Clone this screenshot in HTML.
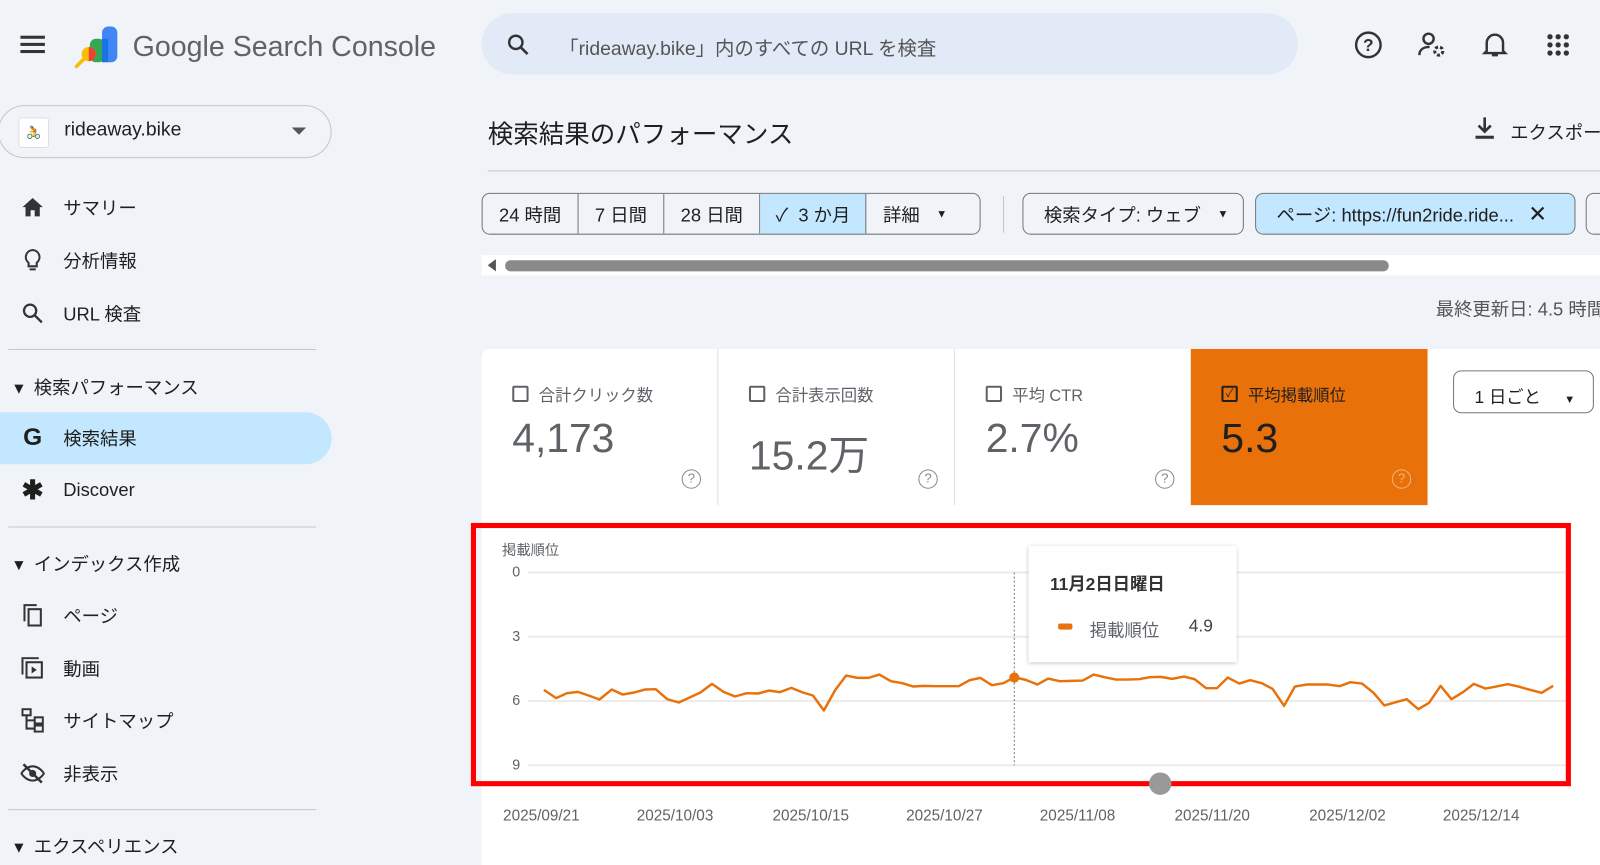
<!DOCTYPE html>
<html><head><meta charset="utf-8"><style>
*{margin:0;padding:0;box-sizing:border-box}
body{width:1600px;height:848px;overflow:hidden;background:#f0f4f9;font-family:"Liberation Sans","Noto Sans CJK JP",sans-serif;color:#1f1f1f;position:relative}
#w{position:absolute;left:0;top:0;width:1600px;height:848px;transform:scale(1.0204);transform-origin:0 0}
.a{position:absolute}
.nav{position:absolute;left:20px;font-size:18px;display:flex;align-items:center}
.nav .ic{width:24px;height:24px;margin-right:18px;display:flex;align-items:center;justify-content:center}
.sec{position:absolute;left:14px;font-size:18px;color:#1f1f1f}
.hr{position:absolute;left:8px;width:302px;height:1px;background:#c4c7c5}
.chip{position:absolute;top:189px;height:41px;border:1px solid #747775;border-radius:8px;font-size:18px;display:flex;align-items:center;background:#f0f4f9}
.seg{height:100%;display:flex;align-items:center;padding:0 16px;border-right:1px solid #747775}
.card{position:absolute;top:342px;height:153px;width:232px;border-right:1px solid #e0e0e0}
.card .t{position:absolute;left:30px;top:32px;font-size:16px;color:#5f6368;display:flex;align-items:center}
.cb{width:16px;height:16px;border:2px solid #5f6368;border-radius:2px;margin-right:10px}
.card .v{position:absolute;left:30px;top:66px;font-size:40px;color:#5f6368}
.q{position:absolute;right:16px;bottom:16px;width:19px;height:19px;border:1.5px solid #888;border-radius:50%;font-size:13px;text-align:center;line-height:16px;color:#888}
.yl{position:absolute;left:502px;font-size:14px;color:#5f6368}
.xl{position:absolute;top:791px;font-size:15px;color:#5f6368}
</style></head><body><div id="w">
<!-- top bar -->
<div class="a" style="left:20px;top:35px;width:24px;height:3px;background:#333;box-shadow:0 7px 0 #333,0 14px 0 #333"></div>
<svg class="a" style="left:72px;top:24px" width="46" height="44" viewBox="0 0 46 44">
<rect x="28" y="2" width="15" height="35" rx="6" fill="#4285f4"/><rect x="16" y="14" width="15" height="23" rx="6" fill="#34a853"/><rect x="28" y="14" width="6" height="23" fill="#1a73e8"/>
<circle cx="15" cy="29" r="7" fill="#fbbc04"/><path d="M15 22a7 7 0 0 1 0 14z" fill="#ea4335"/><line x1="10" y1="34" x2="3" y2="41" stroke="#fbbc04" stroke-width="3.5" stroke-linecap="round"/></svg>
<div class="a" style="left:130px;top:30px;font-size:28px;color:#5f6368">Google Search Console</div>
<div class="a" style="left:472px;top:13px;width:800px;height:60px;border-radius:30px;background:#e2eaf8"></div>
<svg class="a" style="left:496px;top:32px" width="24" height="24" viewBox="0 0 24 24"><circle cx="9.5" cy="9.5" r="6.5" fill="none" stroke="#333" stroke-width="2.4"/><line x1="14" y1="14" x2="21" y2="21" stroke="#333" stroke-width="2.6"/></svg>
<div class="a" style="left:548px;top:33px;font-size:19px;color:#555">「rideaway.bike」内のすべての URL を検査</div>
<svg class="a" style="left:1326px;top:29px" width="30" height="30" viewBox="0 0 30 30"><circle cx="15" cy="15" r="12" fill="none" stroke="#333" stroke-width="2.4"/><text x="15" y="21" text-anchor="middle" font-size="17" font-weight="bold" fill="#333" font-family="Liberation Sans">?</text></svg>
<svg class="a" style="left:1389px;top:30px" width="30" height="28" viewBox="0 0 30 28"><circle cx="11" cy="8" r="5" fill="none" stroke="#333" stroke-width="2.4"/><path d="M2 24c0-6 5-8 10-8" fill="none" stroke="#333" stroke-width="2.4"/><circle cx="21" cy="20" r="4" fill="none" stroke="#333" stroke-width="3" stroke-dasharray="3 2"/></svg>
<svg class="a" style="left:1452px;top:30px" width="26" height="28" viewBox="0 0 26 28"><path d="M5 20V12a8 8 0 0 1 16 0v8l2 2H3z" fill="none" stroke="#333" stroke-width="2.4"/><path d="M10 24h6" stroke="#333" stroke-width="2.4"/></svg>
<svg class="a" style="left:1516px;top:33px" width="22" height="22"><g fill="#333"><circle cx="3" cy="3" r="2.6"/><circle cx="11" cy="3" r="2.6"/><circle cx="19" cy="3" r="2.6"/><circle cx="3" cy="11" r="2.6"/><circle cx="11" cy="11" r="2.6"/><circle cx="19" cy="11" r="2.6"/><circle cx="3" cy="19" r="2.6"/><circle cx="11" cy="19" r="2.6"/><circle cx="19" cy="19" r="2.6"/></g></svg>
<!-- sidebar -->
<div class="a" style="left:-2px;top:103px;width:327px;height:52px;border:1px solid #c4c7c5;border-radius:26px"></div>
<div class="a" style="left:18px;top:115px;width:30px;height:30px;background:#fff;border:1px solid #ddd;border-radius:3px;font-size:12px;text-align:center;line-height:28px;color:#3a6fc0">🚴</div>
<div class="a" style="left:63px;top:117px;font-size:19px">rideaway.bike</div>
<div class="a" style="left:286px;top:125px;border-left:7px solid transparent;border-right:7px solid transparent;border-top:7px solid #555"></div>
<div class="nav" style="top:190px"><span class="ic"><svg width="22" height="20"><path d="M11 1L1 10h3v9h5v-6h4v6h5v-9h3z" fill="#333"/></svg></span>サマリー</div>
<div class="nav" style="top:242px"><span class="ic"><svg width="18" height="24"><path d="M9 2a7 7 0 0 0-4 12.5V18h8v-3.5A7 7 0 0 0 9 2z" fill="none" stroke="#333" stroke-width="2"/><path d="M6 21h6" stroke="#333" stroke-width="2"/></svg></span>分析情報</div>
<div class="nav" style="top:294px"><span class="ic"><svg width="22" height="22"><circle cx="8.5" cy="8.5" r="6" fill="none" stroke="#333" stroke-width="2.2"/><line x1="13" y1="13" x2="20" y2="20" stroke="#333" stroke-width="2.4"/></svg></span>URL 検査</div>
<div class="hr" style="top:342px"></div>
<div class="sec" style="top:366px">▾&nbsp; 検索パフォーマンス</div>
<div class="a" style="left:0;top:404px;width:325px;height:51px;background:#c2e7ff;border-radius:0 26px 26px 0"></div>
<div class="nav" style="top:416px"><span class="ic" style="font-weight:bold;font-size:24px">G</span>検索結果</div>
<div class="nav" style="top:468px"><span class="ic" style="font-size:26px;font-weight:bold">✱</span>Discover</div>
<div class="hr" style="top:516px"></div>
<div class="sec" style="top:539px">▾&nbsp; インデックス作成</div>
<div class="nav" style="top:590px"><span class="ic"><svg width="20" height="24"><rect x="6" y="6" width="12" height="16" fill="none" stroke="#333" stroke-width="2"/><path d="M2 18V2h12" fill="none" stroke="#333" stroke-width="2"/></svg></span>ページ</div>
<div class="nav" style="top:642px"><span class="ic"><svg width="22" height="22"><rect x="5" y="5" width="15" height="15" fill="none" stroke="#333" stroke-width="2"/><path d="M1 17V1h16" fill="none" stroke="#333" stroke-width="2"/><path d="M10 9l5 3.5-5 3.5z" fill="#333"/></svg></span>動画</div>
<div class="nav" style="top:693px"><span class="ic"><svg width="22" height="24"><rect x="1" y="1" width="8" height="6" fill="none" stroke="#333" stroke-width="2"/><rect x="13" y="9" width="8" height="6" fill="none" stroke="#333" stroke-width="2"/><rect x="13" y="17" width="8" height="6" fill="none" stroke="#333" stroke-width="2"/><path d="M5 7v13h8M5 12h8" fill="none" stroke="#333" stroke-width="2"/></svg></span>サイトマップ</div>
<div class="nav" style="top:745px"><span class="ic"><svg width="24" height="20"><path d="M1 10s4-7 11-7 11 7 11 7-4 7-11 7S1 10 1 10z" fill="none" stroke="#333" stroke-width="2"/><circle cx="12" cy="10" r="3.5" fill="#333"/><line x1="3" y1="1" x2="21" y2="19" stroke="#333" stroke-width="2.4"/></svg></span>非表示</div>
<div class="hr" style="top:793px"></div>
<div class="sec" style="top:816px">▾&nbsp; エクスペリエンス</div>
<!-- main -->
<div class="a" style="left:478px;top:112px;font-size:25px">検索結果のパフォーマンス</div>
<svg class="a" style="left:1444px;top:114px" width="22" height="24"><path d="M11 1v13M5 9l6 6 6-6" fill="none" stroke="#333" stroke-width="2.6"/><rect x="2" y="19" width="18" height="3" fill="#333"/></svg>
<div class="a" style="left:1480px;top:116px;font-size:18px">エクスポート</div>
<div class="a" style="left:478px;top:167px;width:1122px;height:1px;background:#c4c7c5"></div>
<div class="chip" style="left:472px;width:489px;overflow:hidden">
<div class="seg">24 時間</div><div class="seg">7 日間</div><div class="seg">28 日間</div>
<div class="seg" style="background:#c2e7ff;padding:0 15px">✓&nbsp; 3 か月</div><div class="seg" style="border:none">詳細 <span style="font-size:11px;margin-left:16px">▼</span></div></div>
<div class="a" style="left:983px;top:192px;width:1px;height:36px;background:#c4c7c5"></div>
<div class="chip" style="left:1002px;width:217px;padding-left:20px">検索タイプ: ウェブ <span style="font-size:11px;margin-left:16px">▼</span></div>
<div class="chip" style="left:1230px;width:314px;padding-left:20px;background:#c2e7ff">ページ: https://fun2ride.ride... <span style="font-size:22px;margin-left:14px">✕</span></div>
<div class="chip" style="left:1554px;width:60px"></div>
<div class="a" style="left:472px;top:250px;width:1128px;height:20px;background:#fff"></div>
<div class="a" style="left:478px;top:254px;border-top:6px solid transparent;border-bottom:6px solid transparent;border-right:8px solid #555"></div>
<div class="a" style="left:495px;top:255px;width:866px;height:11px;border-radius:6px;background:#8a8a8a"></div>
<div class="a" style="left:1407px;top:289px;font-size:18px;color:#555;white-space:nowrap">最終更新日: 4.5 時間前</div>
<!-- cards panel -->
<div class="a" style="left:472px;top:342px;width:1128px;height:506px;background:#fff;border-radius:8px 0 0 0"></div>
<div class="card" style="left:472px"><div class="t"><span class="cb"></span>合計クリック数</div><div class="v">4,173</div><div class="q">?</div></div>
<div class="card" style="left:704px"><div class="t"><span class="cb"></span>合計表示回数</div><div class="v" style="top:72px">15.2万</div><div class="q">?</div></div>
<div class="card" style="left:936px"><div class="t"><span class="cb"></span>平均 CTR</div><div class="v">2.7%</div><div class="q">?</div></div>
<div class="card" style="left:1167px;background:#e8710a;border:none"><div class="t" style="color:#1f1f1f"><span class="cb" style="border-color:#1f1f1f;font-size:11px;line-height:12px;text-align:center">✓</span>平均掲載順位</div><div class="v" style="color:#1f1f1f">5.3</div><div class="q" style="border-color:#f4b27a;color:#f4b27a">?</div></div>
<div class="a" style="left:1424px;top:363px;width:138px;height:42px;border:1px solid #747775;border-radius:8px;font-size:17px;padding:11px 0 0 20px">1 日ごと <span style="font-size:11px;margin-left:18px">▼</span></div>
<!-- chart -->
<div class="a" style="left:492px;top:529px;font-size:14px;color:#5f6368">掲載順位</div>
<div class="yl" style="top:552px">0</div><div class="yl" style="top:615px">3</div><div class="yl" style="top:678px">6</div><div class="yl" style="top:741px">9</div>
<svg class="a" style="left:0;top:0" width="1600" height="848">
<g stroke="#ececec" stroke-width="2"><line x1="517" y1="561" x2="1535" y2="561"/><line x1="517" y1="624" x2="1535" y2="624"/><line x1="517" y1="687" x2="1535" y2="687"/><line x1="517" y1="750" x2="1535" y2="750"/></g>
<line x1="994" y1="561" x2="994" y2="750" stroke="#777" stroke-dasharray="2 2"/>
<g transform="matrix(0.707 0 0 0.326 460.2 509.8)"><polyline fill="none" stroke="#e8710a" stroke-width="2.4" vector-effect="non-scaling-stroke" stroke-linejoin="round" points="103,510 120,535 135,520 150,516 165,527 180,539 197,509 212,524 228,518 243,509 258,508 274,538 290,548 305,533 320,518 336,492 352,516 368,530 384,520 400,521 415,512 430,517 446,504 462,518 476,527 491,572 507,510 522,467 538,474 553,474 568,464 584,484 600,490 615,500 630,498 645,499 662,499 678,499 693,481 708,474 724,496 740,490 755,472 771,480 787,494 802,476 818,484 834,483 850,482 865,464 880,472 896,479 912,479 928,478 943,472 958,471 974,477 990,470 1005,478 1021,505 1036,505 1051,473 1067,491 1082,481 1098,490 1113,507 1129,558 1144,500 1160,494 1175,494 1190,494 1206,499 1221,487 1237,491 1253,519 1268,557 1284,547 1299,538 1315,568 1330,549 1346,498 1361,538 1377,517 1392,492 1408,506 1423,500 1439,493 1454,500 1470,510 1486,519 1502,498"/></g>
<circle cx="994" cy="664" r="5" fill="#e8710a"/>
<rect x="464" y="515" width="1073" height="253" fill="none" stroke="#ff0000" stroke-width="5"/>
<circle cx="1137" cy="768" r="11" fill="#999"/>
</svg>
<div class="a" style="left:1008px;top:535px;width:204px;height:114px;background:#fff;box-shadow:0 1px 4px rgba(0,0,0,.25)"></div>
<div class="a" style="left:1029px;top:558px;font-size:17px;color:#333;font-weight:bold">11月2日日曜日</div>
<div class="a" style="left:1037px;top:611px;width:14px;height:6px;border-radius:2px;background:#e8710a"></div>
<div class="a" style="left:1068px;top:604px;font-size:17px;color:#5f6368">掲載順位</div>
<div class="a" style="left:1165px;top:604px;font-size:17px;color:#444">4.9</div>
<div class="xl" style="left:493px">2025/09/21</div><div class="xl" style="left:624px">2025/10/03</div><div class="xl" style="left:757px">2025/10/15</div><div class="xl" style="left:888px">2025/10/27</div><div class="xl" style="left:1019px">2025/11/08</div><div class="xl" style="left:1151px">2025/11/20</div><div class="xl" style="left:1283px">2025/12/02</div><div class="xl" style="left:1414px">2025/12/14</div>
</div></body></html>
